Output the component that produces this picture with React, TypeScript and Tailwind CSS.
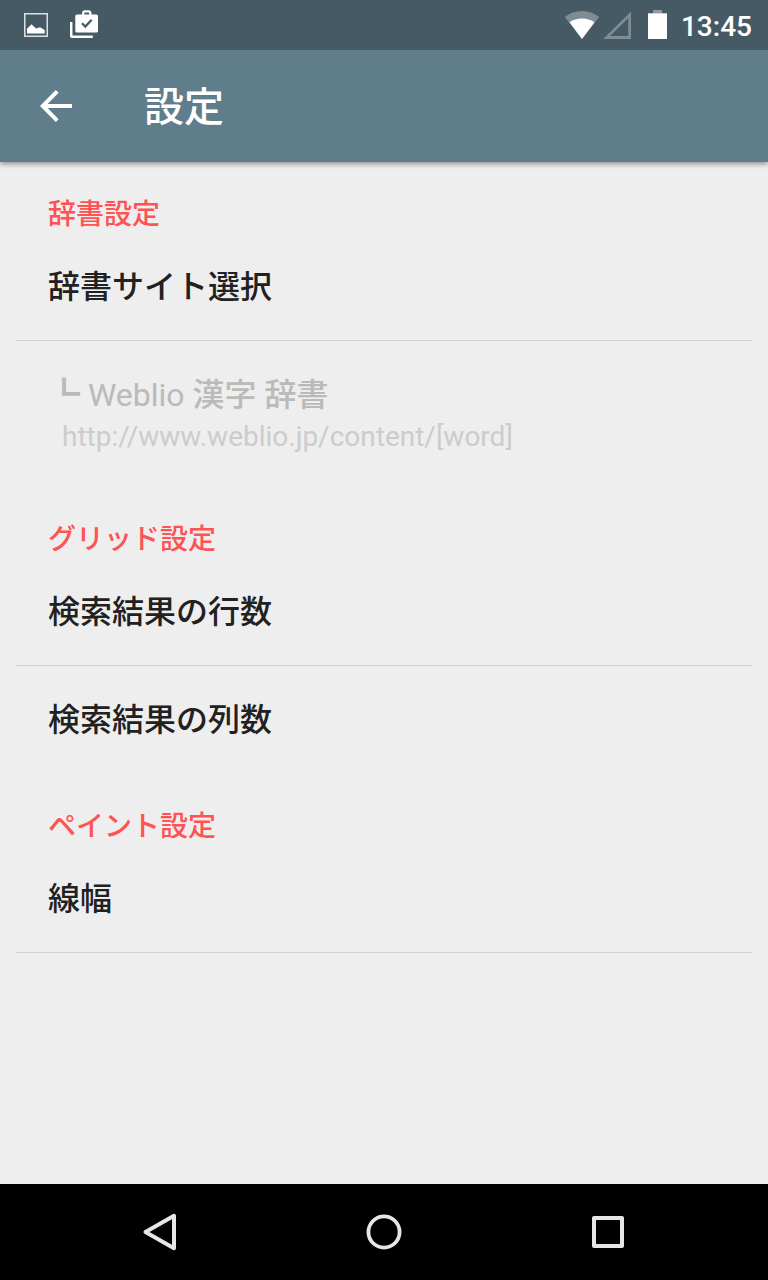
import type { ReactNode } from 'react';

function StatusBar() {
  return (
    <div className="relative z-10 flex h-[50px] shrink-0 items-center bg-[#465a65] pl-6 pr-4 text-white">
      <svg width="24" height="24" viewBox="0 0 24 24">
        <rect x="0.75" y="0.75" width="22.5" height="22.5" fill="none" stroke="#dce1e3" strokeWidth="1.5" />
        <path d="M3 20.5V15.8L7.5 11.2 12 15.6 16 14.3 20.7 17V20.5Z" fill="#fff" />
      </svg>
      <svg width="28" height="28" viewBox="0 0 28 28" className="-mt-0.5 ml-[22px]">
        <path d="M1.2 12V25.5Q1.2 26.8 2.5 26.8H22.8" fill="none" stroke="#fff" strokeWidth="2.5" />
        <path d="M13.2 5V3.2Q13.2 1.3 15 1.3H18.5Q20.3 1.3 20.3 3.2V5" fill="none" stroke="#fff" strokeWidth="2.3" />
        <rect x="5.3" y="4.5" width="22.7" height="18" rx="1.5" fill="#fff" />
        <path d="M12 13.3L15.3 16.6 21.7 9.7" fill="none" stroke="#465a65" strokeWidth="2.2" />
      </svg>
      <div className="grow" />
      <svg width="36" height="28" viewBox="0 0 36 28">
        <path d="M18 28L0.8 6Q8.3 0 18 0T35.2 6Z" fill="#7e8c93" />
        <path d="M18 28L5.5 11.2Q11 7.5 18 7.5T30.5 11.2Z" fill="#fff" />
      </svg>
      <svg width="29" height="29" viewBox="0 0 29 29" className="ml-[3px]">
        <path d="M3.6 26.5H26.6V3.8Z" fill="none" stroke="#7e8c93" strokeWidth="2.8" />
      </svg>
      <svg width="19" height="29" viewBox="0 0 19 29" className="-mt-0.5 ml-4">
        <rect x="5" y="0" width="9" height="3.5" fill="#909ca2" />
        <rect x="0" y="3.3" width="19" height="25.7" fill="#fff" />
      </svg>
      <span className="ml-[14px] mt-1 text-[28px] leading-8 font-medium">13:45</span>
    </div>
  );
}

function Toolbar() {
  return (
    <header className="relative flex h-28 shrink-0 items-center bg-[#607d8b] pl-10 text-white shadow-[0_2px_5px_rgba(0,0,0,0.4)]">
      <svg width="32" height="32" viewBox="0 0 32 32">
        <path d="M32 16H3M17.2 1.4L2.8 16L17.2 30.6" fill="none" stroke="#fff" strokeWidth="4" />
      </svg>
      <h1 className="ml-[72px] pt-1 text-[40px] leading-[48px] font-medium">設定</h1>
    </header>
  );
}

function SectionTitle({ children }: { children: ReactNode }) {
  return (
    <h2 className="flex h-[72px] items-end px-12 text-[28px] leading-9 font-medium text-[#ff5252]">
      {children}
    </h2>
  );
}

function Item({ title, divider = true }: { title: string; divider?: boolean }) {
  return (
    <div className={divider ? 'mx-4 flex h-[108px] items-center border-b border-[#cfcfcf] px-8' : 'mx-4 flex h-[107px] items-center px-8'}>
      <span className="text-[32px] leading-10 font-medium text-[#212121]">{title}</span>
    </div>
  );
}

export default function App() {
  return (
    <div className="flex h-[1280px] w-[768px] flex-col overflow-hidden bg-[#eeeeee] font-[Roboto,'Noto_Sans_CJK_JP',sans-serif]" lang="ja">
      <StatusBar />
      <Toolbar />

      <main className="-mt-px grow">
        <SectionTitle>辞書設定</SectionTitle>
        <Item title="辞書サイト選択" />
        <div className="flex h-[145px] flex-col justify-center px-12 pt-1">
          <span className="text-[32px] leading-[42px] text-[#bababa]">
            ┗ Weblio <span className="font-medium">漢字 辞書</span>
          </span>
          <span className="pl-3.5 text-[28px] leading-[42px] text-[#cccccc]">http://www.weblio.jp/content/[word]</span>
        </div>

        <SectionTitle>グリッド設定</SectionTitle>
        <Item title="検索結果の行数" />
        <Item title="検索結果の列数" divider={false} />

        <SectionTitle>ペイント設定</SectionTitle>
        <Item title="線幅" />
      </main>

      <nav className="flex h-24 shrink-0 items-center justify-between bg-black px-[140px]">
        <svg width="40" height="40" viewBox="0 0 40 40" fill="none" stroke="#e6e6e6" strokeWidth="4" strokeLinejoin="round">
          <path d="M5.5 20L34 3.8V36.2Z" />
        </svg>
        <svg width="40" height="40" viewBox="0 0 40 40" fill="none" stroke="#e6e6e6" strokeWidth="3.8">
          <circle cx="20" cy="20" r="15.6" />
        </svg>
        <svg width="40" height="40" viewBox="0 0 40 40" fill="none" stroke="#e6e6e6" strokeWidth="4" strokeLinejoin="round">
          <rect x="6" y="6" width="28" height="28" />
        </svg>
      </nav>
    </div>
  );
}
